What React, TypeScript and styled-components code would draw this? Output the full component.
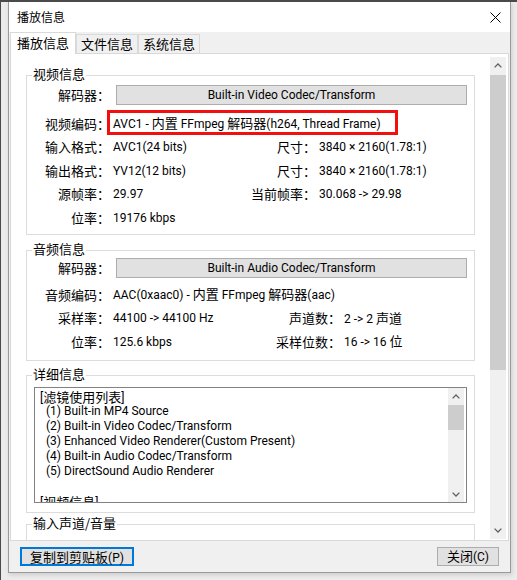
import React from "react";
import styled, { createGlobalStyle } from "styled-components";

const Global = createGlobalStyle`
  html, body { margin: 0; padding: 0; background: #ebebeb; }
  body {
    font-family: "Roboto", "Noto Sans CJK SC", sans-serif;
    font-size: 12px;
    color: #000;
  }
`;

const Han = styled.span`
  font-family: "Noto Sans CJK SC", sans-serif;
  font-size: 13px;
`;

const CJK_RUN = /([\u3000-\u303f\u4e00-\u9fff\uff00-\uffef]+)/;

const mixed = (text: string) =>
  text.split(CJK_RUN).map((part, i) =>
    i % 2 === 1 ? <Han key={i}>{part}</Han> : <React.Fragment key={i}>{part}</React.Fragment>
  );

const Screen = styled.div`
  width: 517px;
  height: 580px;
  box-sizing: border-box;
  border-top: 2px solid #4a4a4a;
  border-left: 1px solid #4a4a4a;
  padding-left: 7px;
  background: #ebebeb;
  overflow: hidden;
`;

const Window = styled.div`
  width: 503px;
  height: 571px;
  box-sizing: border-box;
  border: 1px solid #9a9a9a;
  border-top: none;
  background: #f0f0f0;
  display: flex;
  flex-direction: column;
  box-shadow: 1px 2px 4px rgba(0, 0, 0, 0.12);
`;

const TitleBar = styled.div`
  height: 30px;
  flex: none;
  background: #fff;
  display: flex;
  align-items: center;
  justify-content: space-between;
  padding: 0 9px 0 8px;
  font-family: "Noto Sans CJK SC", sans-serif;
  font-size: 12px;
  line-height: 16px;
`;

const Body = styled.div`
  flex: 1;
  display: flex;
  flex-direction: column;
  padding: 0 1px;
  min-height: 0;
`;

const TabStrip = styled.div`
  height: 21px;
  flex: none;
  display: flex;
  align-items: flex-end;
`;

const Tab = styled.div<{ $active?: boolean }>`
  box-sizing: border-box;
  height: ${(p) => (p.$active ? 22 : 19)}px;
  margin-bottom: ${(p) => (p.$active ? -1 : 0)}px;
  padding: ${(p) => (p.$active ? "1px 6px 0" : "0 4px")};
  border: 1px solid #d9d9d9;
  border-bottom: none;
  background: ${(p) => (p.$active ? "#fff" : "#f0f0f0")};
  position: relative;
  z-index: ${(p) => (p.$active ? 2 : 0)};
  font-family: "Noto Sans CJK SC", sans-serif;
  font-size: 13px;
  line-height: 17px;
  white-space: nowrap;
`;

const Panel = styled.div`
  height: 488px;
  flex: none;
  box-sizing: border-box;
  border: 1px solid #d9d9d9;
  background: #fff;
  display: flex;
`;

const ScrollView = styled.div`
  flex: 1;
  min-width: 0;
  overflow: hidden;
  padding: 21px 15px 0 15px;
  display: flex;
  flex-direction: column;
`;

const ScrollBar = styled.div<{ $m: string }>`
  width: 16px;
  flex: none;
  margin: ${(p) => p.$m};
  background: #f0f0f0;
  display: flex;
  flex-direction: column;
`;

const Arrow = styled.div<{ $h: number }>`
  height: ${(p) => p.$h}px;
  flex: none;
  display: flex;
  align-items: center;
  justify-content: center;
`;

const Track = styled.div`
  flex: 1;
  min-height: 0;
  display: flex;
  flex-direction: column;
`;

const Thumb = styled.div<{ $top: number; $h: number }>`
  flex: none;
  margin-top: ${(p) => p.$top}px;
  height: ${(p) => p.$h}px;
  background: #cdcdcd;
`;

const Group = styled.section<{ $h: number; $pt: number; $mt: number }>`
  position: relative;
  flex: none;
  box-sizing: border-box;
  height: ${(p) => p.$h}px;
  margin-top: ${(p) => p.$mt}px;
  padding-top: ${(p) => p.$pt}px;
  border: 1px solid #dcdcdc;
`;

const Legend = styled.span`
  position: absolute;
  top: -10px;
  left: 5px;
  padding: 0 1px;
  background: #fff;
  font-family: "Noto Sans CJK SC", sans-serif;
  font-size: 13px;
  line-height: 16px;
  white-space: nowrap;
`;

const DecoderRow = styled.div`
  display: grid;
  grid-template-columns: 83px 351px;
  column-gap: 6px;
  align-items: center;
`;

const Label = styled.span`
  text-align: right;
  white-space: nowrap;
  font-family: "Noto Sans CJK SC", sans-serif;
  font-size: 13px;
  line-height: 16px;
`;

const CodecButton = styled.div`
  height: 20px;
  box-sizing: border-box;
  background: #e1e1e1;
  border: 1px solid #adadad;
  display: flex;
  align-items: center;
  justify-content: center;
  line-height: 16px;
  white-space: nowrap;
`;

const Rows = styled.div<{ $w: number; $mt: number }>`
  display: grid;
  grid-template-columns: 83px ${(p) => p.$w}px 70px 1fr;
  grid-auto-rows: 23.5px;
  column-gap: 3px;
  align-items: center;
  margin-top: ${(p) => p.$mt}px;
`;

const Value = styled.span<{ $wide?: boolean }>`
  position: relative;
  white-space: nowrap;
  line-height: 16px;
  ${(p) => (p.$wide ? "grid-column: 2 / -1;" : "")}
`;

const Highlight = styled.span`
  position: absolute;
  left: -6px;
  top: -5px;
  width: 291px;
  height: 25px;
  box-sizing: border-box;
  border: 3px solid #f20f0f;
  pointer-events: none;
`;

const ListBox = styled.div`
  margin: 0 7px;
  height: 116px;
  box-sizing: border-box;
  border: 1px solid #828282;
  background: #fff;
  display: flex;
`;

const ListText = styled.div`
  flex: 1;
  min-width: 0;
  overflow: hidden;
  padding: 1px 0 0 5px;
`;

const ListLine = styled.div<{ $indent?: boolean }>`
  height: 15px;
  line-height: 15px;
  white-space: nowrap;
  padding-left: ${(p) => (p.$indent ? 6 : 0)}px;
`;

const BottomBar = styled.div`
  flex: 1;
  display: flex;
  justify-content: space-between;
  align-items: flex-start;
  padding: 6px 11px 0 11px;
  margin: 0 -1px;
`;

const Button = styled.button<{ $w: number; $focus?: boolean }>`
  width: ${(p) => p.$w}px;
  height: 19px;
  box-sizing: border-box;
  padding: 0;
  background: #e1e1e1;
  border: ${(p) => (p.$focus ? "2px solid #0078d7" : "1px solid #adadad")};
  font: inherit;
  font-size: 12px;
  line-height: 15px;
  color: #000;
  white-space: nowrap;
`;

const Chevron = ({ dir }: { dir: "up" | "down" }) => (
  <svg width="8" height="5" viewBox="0 0 8 5">
    <path
      d={dir === "up" ? "M0.6 4.4 L4 1 L7.4 4.4" : "M0.6 0.6 L4 4 L7.4 0.6"}
      fill="none"
      stroke="#606060"
      strokeWidth="1.3"
    />
  </svg>
);

const CloseIcon = () => (
  <svg width="11" height="11" viewBox="0 0 11 11">
    <path d="M0.5 0.5 L10.5 10.5 M10.5 0.5 L0.5 10.5" stroke="#000" strokeWidth="1" fill="none" />
  </svg>
);

type Row = { l: string; v: string; rl?: string; rv?: string; wide?: boolean; mark?: boolean };

const videoRows: Row[] = [
  { l: "视频编码：", v: "AVC1 - 内置 FFmpeg 解码器(h264, Thread Frame)", wide: true, mark: true },
  { l: "输入格式：", v: "AVC1(24 bits)", rl: "尺寸：", rv: "3840 × 2160(1.78:1)" },
  { l: "输出格式：", v: "YV12(12 bits)", rl: "尺寸：", rv: "3840 × 2160(1.78:1)" },
  { l: "源帧率：", v: "29.97", rl: "当前帧率：", rv: "30.068 -> 29.98" },
  { l: "位率：", v: "19176 kbps" },
];

const audioRows: Row[] = [
  { l: "音频编码：", v: "AAC(0xaac0) - 内置 FFmpeg 解码器(aac)", wide: true },
  { l: "采样率：", v: "44100 -> 44100 Hz", rl: "声道数：", rv: "2 -> 2 声道" },
  { l: "位率：", v: "125.6 kbps", rl: "采样位数：", rv: "16 -> 16 位" },
];

const listLines: { t: string; indent?: boolean }[] = [
  { t: "[滤镜使用列表]" },
  { t: "(1) Built-in MP4 Source", indent: true },
  { t: "(2) Built-in Video Codec/Transform", indent: true },
  { t: "(3) Enhanced Video Renderer(Custom Present)", indent: true },
  { t: "(4) Built-in Audio Codec/Transform", indent: true },
  { t: "(5) DirectSound Audio Renderer", indent: true },
  { t: "" },
  { t: "[视频信息]" },
];

const InfoRows = ({ rows, w, mt }: { rows: Row[]; w: number; mt: number }) => (
  <Rows $w={w} $mt={mt}>
    {rows.map((r, i) => (
      <React.Fragment key={i}>
        <Label>{r.l}</Label>
        <Value $wide={r.wide}>
          {mixed(r.v)}
          {r.mark && <Highlight />}
        </Value>
        {r.rl && <Label>{r.rl}</Label>}
        {r.rv && <Value>{mixed(r.rv)}</Value>}
      </React.Fragment>
    ))}
  </Rows>
);

export default function App() {
  return (
    <>
      <Global />
      <Screen>
        <Window>
          <TitleBar>
            <span>播放信息</span>
            <CloseIcon />
          </TitleBar>
          <Body>
            <TabStrip>
              <Tab $active>播放信息</Tab>
              <Tab>文件信息</Tab>
              <Tab>系统信息</Tab>
            </TabStrip>
            <Panel>
              <ScrollView>
                <Group $h={160} $pt={9} $mt={0}>
                  <Legend>视频信息</Legend>
                  <DecoderRow>
                    <Label>解码器：</Label>
                    <CodecButton>Built-in Video Codec/Transform</CodecButton>
                  </DecoderRow>
                  <InfoRows rows={videoRows} w={130} mt={7} />
                </Group>
                <Group $h={111} $pt={7} $mt={15}>
                  <Legend>音频信息</Legend>
                  <DecoderRow>
                    <Label>解码器：</Label>
                    <CodecButton>Built-in Audio Codec/Transform</CodecButton>
                  </DecoderRow>
                  <InfoRows rows={audioRows} w={155} mt={5} />
                </Group>
                <Group $h={138} $pt={11} $mt={14}>
                  <Legend>详细信息</Legend>
                  <ListBox>
                    <ListText>
                      {listLines.map((l, i) => (
                        <ListLine key={i} $indent={l.indent}>
                          {mixed(l.t)}
                        </ListLine>
                      ))}
                    </ListText>
                    <ScrollBar $m="0 2px 0 0">
                      <Arrow $h={16}>
                        <Chevron dir="up" />
                      </Arrow>
                      <Track>
                        <Thumb $top={1} $h={25} />
                      </Track>
                      <Arrow $h={16}>
                        <Chevron dir="down" />
                      </Arrow>
                    </ScrollBar>
                  </ListBox>
                </Group>
                <Group $h={40} $pt={0} $mt={11}>
                  <Legend>输入声道/音量</Legend>
                </Group>
              </ScrollView>
              <ScrollBar $m="3px 2px 1px 0">
                <Arrow $h={17}>
                  <Chevron dir="up" />
                </Arrow>
                <Track>
                  <Thumb $top={1} $h={295} />
                </Track>
                <Arrow $h={17}>
                  <Chevron dir="down" />
                </Arrow>
              </ScrollBar>
            </Panel>
            <BottomBar>
              <Button $w={114} $focus>
                {mixed("复制到剪贴板(P)")}
              </Button>
              <Button $w={62}>{mixed("关闭(C)")}</Button>
            </BottomBar>
          </Body>
        </Window>
      </Screen>
    </>
  );
}
